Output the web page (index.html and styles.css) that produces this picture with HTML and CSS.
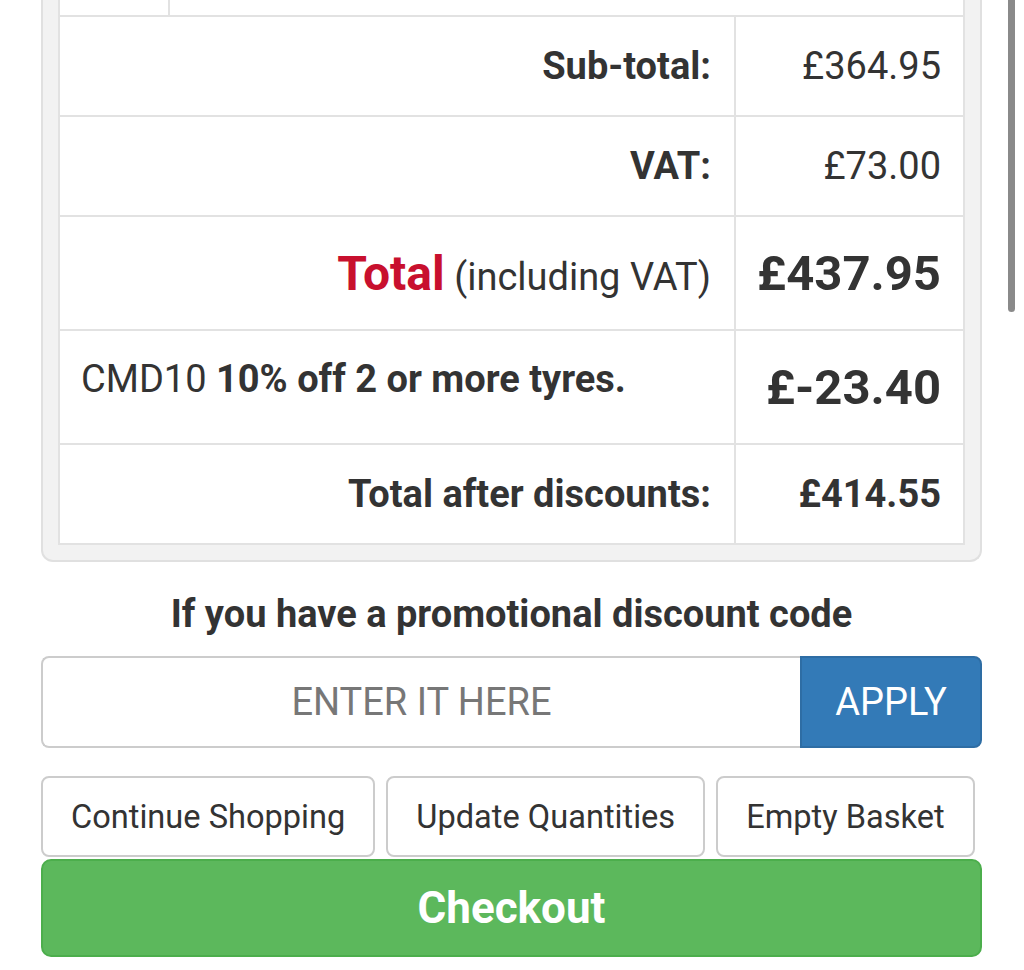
FILE: index.html
```html
<!DOCTYPE html>
<html lang="en-GB">
<head>
    <meta charset="UTF-8">
    <meta name="viewport" content="width=device-width, initial-scale=1.0">
    <title>Basket</title>
    <link rel="stylesheet" href="styles.css">
</head>
<body>
    <div class="scroll-thumb"></div>

    <div class="page">
        <div class="basket-panel">
            <table class="totals-table">
                <colgroup>
                    <col class="col-img">
                    <col>
                    <col class="col-price">
                </colgroup>
                <tr class="cut-row">
                    <td></td>
                    <td colspan="2"></td>
                </tr>
                <tr>
                    <td colspan="2" class="label">Sub-total:</td>
                    <td class="amount">£364.95</td>
                </tr>
                <tr>
                    <td colspan="2" class="label">VAT:</td>
                    <td class="amount">£73.00</td>
                </tr>
                <tr class="big-row">
                    <td colspan="2" class="label"><span class="total-word">Total</span> <span class="light">(including VAT)</span></td>
                    <td class="amount big">£437.95</td>
                </tr>
                <tr class="big-row">
                    <td colspan="2" class="discount-name">CMD10 <b>10% off 2 or more tyres.</b></td>
                    <td class="amount big">£-23.40</td>
                </tr>
                <tr>
                    <td colspan="2" class="label">Total after discounts:</td>
                    <td class="amount strong">£414.55</td>
                </tr>
            </table>
        </div>

        <h2 class="promo-title">If you have a promotional discount code</h2>

        <form class="promo-form">
            <input type="text" class="promo-input" placeholder="ENTER IT HERE">
            <button type="button" class="btn-apply">APPLY</button>
        </form>

        <div class="basket-actions">
            <a href="#" class="btn-plain">Continue Shopping</a>
            <a href="#" class="btn-plain">Update Quantities</a>
            <a href="#" class="btn-plain">Empty Basket</a>
        </div>

        <a href="#" class="btn-checkout">Checkout</a>
    </div>
</body>
</html>
```

FILE: styles.css
```css
* {
    margin: 0;
    padding: 0;
    box-sizing: border-box;
    font-family: Roboto, "Liberation Sans", sans-serif;
}

body {
    background-color: #fff;
    color: #333;
}

.scroll-thumb {
    position: fixed;
    top: 0;
    right: 9px;
    width: 7px;
    height: 312px;
    border-radius: 0 0 4px 4px;
    background-color: #8a8a8a;
}

.page {
    width: 941px;
    margin-left: 41px;
}

.basket-panel {
    background-color: #f2f2f2;
    border: 2px solid #e0e0e0;
    border-top: 0;
    border-radius: 0 0 12px 12px;
    padding: 0 15px 15px;
}

.totals-table {
    width: 100%;
    border-collapse: collapse;
    background-color: #fff;
    font-size: 38px;
}

.col-img {
    width: 110px;
}

.col-price {
    width: 229px;
}

.totals-table td {
    border: 2px solid #e2e2e2;
    height: 100px;
    padding: 0 23px;
    vertical-align: middle;
}

.totals-table td.amount {
    width: 229px;
    padding: 0 22px 0 10px;
}

.totals-table .cut-row td {
    border-top: 0;
    height: 16px;
}

.totals-table .big-row td {
    height: 114px;
}

.label {
    text-align: right;
    font-weight: 700;
}

.total-word {
    color: #c8102e;
    font-size: 48px;
}

.light {
    font-weight: 400;
}

.totals-table .discount-name {
    text-align: left;
    padding: 0 21px 16px;
}

.amount {
    text-align: right;
}

.amount.big {
    font-size: 49px;
    font-weight: 700;
}

.amount.strong {
    font-weight: 700;
}

.promo-title {
    font-size: 38px;
    font-weight: 700;
    text-align: center;
    margin: 30px 0 20px;
}

.promo-form {
    display: flex;
    height: 92px;
}

.promo-input {
    flex: 1;
    border: 2px solid #ccc;
    border-right: 0;
    border-radius: 8px 0 0 8px;
    font-size: 38px;
    text-align: center;
    color: #555;
}

.promo-input::placeholder {
    color: #777;
}

.btn-apply {
    width: 182px;
    background-color: #337ab7;
    border: 2px solid #2e6da4;
    border-radius: 0 8px 8px 0;
    color: #fff;
    font-size: 38px;
}

.basket-actions {
    display: flex;
    gap: 11px;
    margin-top: 28px;
}

.btn-plain {
    display: flex;
    align-items: center;
    flex-shrink: 0;
    height: 81px;
    padding: 0 28px;
    border: 2px solid #ccc;
    border-radius: 8px;
    background-color: #fff;
    color: #333;
    font-size: 32.6px;
    white-space: nowrap;
    text-decoration: none;
}

.btn-checkout {
    display: flex;
    align-items: center;
    justify-content: center;
    height: 98px;
    margin-top: 2px;
    border: 2px solid #4cae4c;
    border-radius: 10px;
    background-color: #5cb85c;
    color: #fff;
    font-size: 44px;
    font-weight: 700;
    text-decoration: none;
}
```
